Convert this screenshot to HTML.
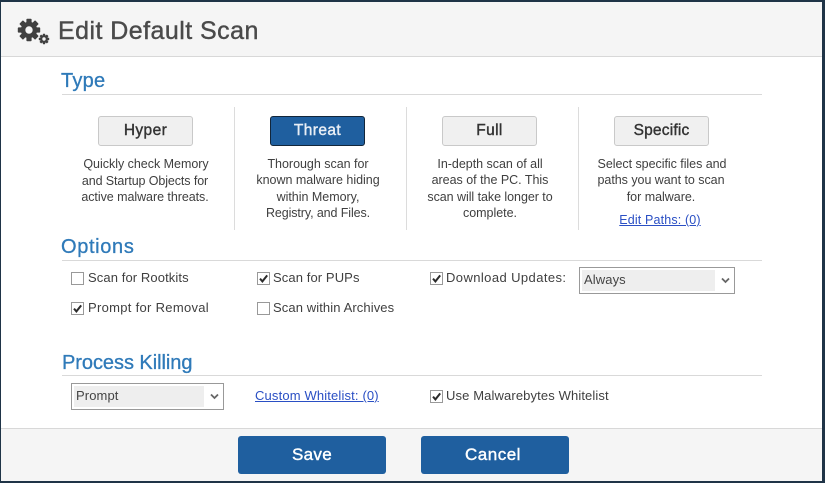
<!DOCTYPE html>
<html><head><meta charset="utf-8">
<style>
html,body{margin:0;padding:0;width:825px;height:483px;overflow:hidden;background:#1f3447}
body{position:relative;font-family:"Liberation Sans",sans-serif}
#w{position:absolute;left:0;top:0;width:825px;height:483px;filter:blur(.3px)}
#d{position:absolute;left:1px;top:2px;width:821px;height:479px;background:#fff}
.a{position:absolute}
.t{position:absolute;white-space:nowrap;font-size:12.5px;line-height:16px;color:#3f3f3f;letter-spacing:-.02px}
.q{font-size:13px;letter-spacing:.15px;margin-top:1px}
.c{transform:translateX(-50%);text-align:center}
.h{position:absolute;white-space:nowrap;font-size:20px;line-height:24px;color:#2f7ab9;-webkit-text-stroke:.3px #2f7ab9}
.r{position:absolute;height:1px;background:#d9d9d9}
.v{position:absolute;width:1px;top:107px;height:123px;background:#dcdcdc}
.b{position:absolute;top:116px;width:93px;height:28px;border:1px solid #c9c9c9;border-radius:3px;background:#f0f0f0;color:#333;font-size:15.5px;line-height:28px;text-align:center;letter-spacing:.4px;-webkit-text-stroke:.4px #333}
.k{position:absolute;width:11px;height:11px;border:1px solid #999;background:#fff}
.k svg{position:absolute;left:0;top:0}
.s{position:absolute;border:1px solid #999;background:#fff;height:25px}
.s i{position:absolute;left:2px;top:2px;bottom:2px;background:#eeeeee}
.s span{position:absolute;left:4px;top:4px;font-size:13px;line-height:16px;color:#444;letter-spacing:.1px}
.s svg{position:absolute;top:9px}
.l{color:#2a4fc4;text-decoration:underline}
.p{position:absolute;top:436px;width:148px;height:38px;background:#1f5f9f;border-radius:3px;color:#fff;font-size:17px;line-height:37px;text-align:center;letter-spacing:.3px;-webkit-text-stroke:.4px #fff;box-sizing:border-box}
</style></head><body>
<div id="w">
<div id="d"></div>
<div class="a" style="left:1px;top:2px;width:821px;height:54px;background:#f5f5f5"></div>
<div class="r" style="left:1px;top:56px;width:821px;background:#d8d8d8"></div>
<svg class="a" style="left:16px;top:17px" width="38" height="30" viewBox="0 0 38 30">
<g fill="#404040">
<g transform="translate(13,13)"><circle r="8.2"/>
<rect x="-2.6" y="-11.2" width="5.2" height="22.4" rx=".8"/>
<rect x="-2.6" y="-11.2" width="5.2" height="22.4" rx=".8" transform="rotate(45)"/>
<rect x="-2.6" y="-11.2" width="5.2" height="22.4" rx=".8" transform="rotate(90)"/>
<rect x="-2.6" y="-11.2" width="5.2" height="22.4" rx=".8" transform="rotate(135)"/>
<circle r="3.7" fill="#f5f5f5"/></g>
<g transform="translate(28,22)"><circle r="4"/>
<rect x="-1.2" y="-5.2" width="2.4" height="10.4" rx=".4"/>
<rect x="-1.2" y="-5.2" width="2.4" height="10.4" rx=".4" transform="rotate(45)"/>
<rect x="-1.2" y="-5.2" width="2.4" height="10.4" rx=".4" transform="rotate(90)"/>
<rect x="-1.2" y="-5.2" width="2.4" height="10.4" rx=".4" transform="rotate(135)"/>
<circle r="1.7" fill="#f5f5f5"/></g>
</g></svg>
<div class="t" style="left:58px;top:16px;font-size:25px;line-height:30px;color:#4a4a4a;letter-spacing:.45px;-webkit-text-stroke:.4px #4a4a4a">Edit Default Scan</div>

<div class="h" style="left:61px;top:69px;letter-spacing:.25px">Type</div>
<div class="r" style="left:62px;top:94px;width:700px"></div>
<div class="v" style="left:234px"></div><div class="v" style="left:406px"></div><div class="v" style="left:578px"></div>

<div class="b" style="left:98px">Hyper</div>
<div class="b" style="left:270px;background:#1f5f9f;border-color:#12263a;color:#e8eef5;-webkit-text-stroke:.4px #e8eef5">Threat</div>
<div class="b" style="left:442px">Full</div>
<div class="b" style="left:614px;letter-spacing:.2px">Specific</div>

<div class="t c" style="left:146px;top:156px">Quickly check Memory</div>
<div class="t c" style="left:145px;top:173px;letter-spacing:-.1px">and Startup Objects for</div>
<div class="t c" style="left:145px;top:189px;letter-spacing:-.05px">active malware threats.</div>

<div class="t c" style="left:318px;top:156px">Thorough scan for</div>
<div class="t c" style="left:318px;top:172px">known malware hiding</div>
<div class="t c" style="left:318px;top:189px">within Memory,</div>
<div class="t c" style="left:318px;top:205px;letter-spacing:-.1px">Registry, and Files.</div>

<div class="t c" style="left:490px;top:156px">In-depth scan of all</div>
<div class="t c" style="left:490px;top:172px">areas of the PC. This</div>
<div class="t c" style="left:490px;top:189px;letter-spacing:-.05px">scan will take longer to</div>
<div class="t c" style="left:490px;top:205px">complete.</div>

<div class="t c" style="left:662px;top:156px;letter-spacing:-.04px">Select specific files and</div>
<div class="t c" style="left:661px;top:172px;letter-spacing:-.04px">paths you want to scan</div>
<div class="t c" style="left:661px;top:189px">for malware.</div>
<div class="t c l" style="left:660px;top:212px;letter-spacing:.15px">Edit Paths: (0)</div>

<div class="h" style="left:61px;top:235px;letter-spacing:.65px">Options</div>
<div class="r" style="left:62px;top:260px;width:700px"></div>

<div class="k" style="left:71px;top:272px"></div>
<div class="t q" style="left:88px;top:269px;letter-spacing:.1px">Scan for Rootkits</div>
<div class="k" style="left:257px;top:272px"><svg width="11" height="11"><path d="M2 5.6 4.4 8.4 9.2 2.4" fill="none" stroke="#2b2b2b" stroke-width="2"/></svg></div>
<div class="t q" style="left:273px;top:269px;letter-spacing:.1px">Scan for PUPs</div>
<div class="k" style="left:430px;top:272px"><svg width="11" height="11"><path d="M2 5.6 4.4 8.4 9.2 2.4" fill="none" stroke="#2b2b2b" stroke-width="2"/></svg></div>
<div class="t q" style="left:446px;top:269px;letter-spacing:.41px">Download Updates:</div>
<div class="s" style="left:579px;top:267px;width:154px"><i style="width:133px"></i><span>Always</span><svg style="left:141px" width="9" height="7"><path d="M1 1.5 4.5 5 8 1.5" fill="none" stroke="#666" stroke-width="1.8"/></svg></div>

<div class="k" style="left:71px;top:302px"><svg width="11" height="11"><path d="M2 5.6 4.4 8.4 9.2 2.4" fill="none" stroke="#2b2b2b" stroke-width="2"/></svg></div>
<div class="t q" style="left:88px;top:299px;letter-spacing:.3px">Prompt for Removal</div>
<div class="k" style="left:257px;top:302px"></div>
<div class="t q" style="left:273px;top:299px;letter-spacing:.1px">Scan within Archives</div>

<div class="h" style="left:62px;top:351px;letter-spacing:-.05px">Process Killing</div>
<div class="r" style="left:62px;top:375px;width:700px"></div>

<div class="s" style="left:71px;top:383px;width:151px"><i style="width:130px"></i><span>Prompt</span><svg style="left:138px" width="9" height="7"><path d="M1 1.5 4.5 5 8 1.5" fill="none" stroke="#666" stroke-width="1.8"/></svg></div>
<div class="t q l" style="left:255px;top:387px;letter-spacing:.15px">Custom Whitelist: (0)</div>
<div class="k" style="left:430px;top:390px"><svg width="11" height="11"><path d="M2 5.6 4.4 8.4 9.2 2.4" fill="none" stroke="#2b2b2b" stroke-width="2"/></svg></div>
<div class="t q" style="left:446px;top:387px;letter-spacing:.12px">Use Malwarebytes Whitelist</div>

<div class="a" style="left:1px;top:428px;width:821px;height:53px;background:#f5f5f5;border-top:1px solid #d8d8d8;box-sizing:border-box"></div>
<div class="p" style="left:238px">Save</div>
<div class="p" style="left:421px;padding-right:4px;letter-spacing:.5px">Cancel</div>
</div>
</body></html>
